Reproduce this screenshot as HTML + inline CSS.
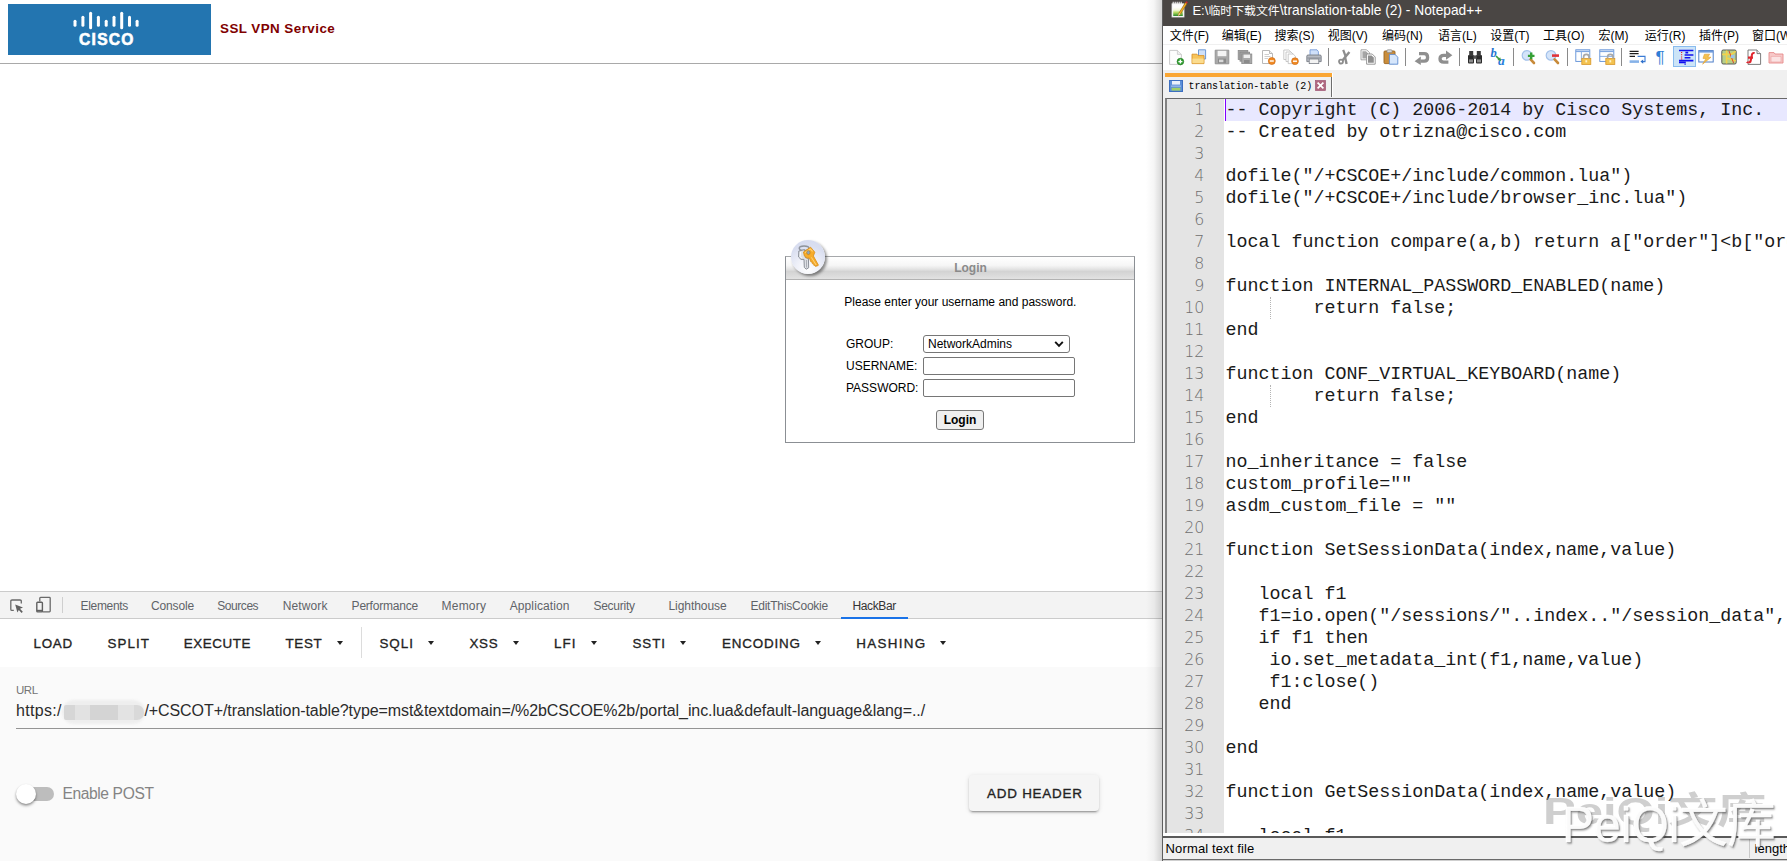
<!DOCTYPE html>
<html lang="en">
<head>
<meta charset="utf-8">
<title>SSL VPN Service</title>
<style>
*{box-sizing:border-box;margin:0;padding:0}
html,body{width:1787px;height:861px;overflow:hidden;background:#fff}
body{position:relative;font-family:"Liberation Sans","Noto Sans CJK SC",sans-serif;color:#000}
.abs{position:absolute}
/* ---------- browser page ---------- */
#page{position:absolute;left:0;top:0;width:1163px;height:591px;background:#fff;overflow:hidden}
#logo{position:absolute;left:8px;top:4px;width:203px;height:51px;background:#2375b0}
#svc{position:absolute;left:220px;top:21px;font-size:13.4px;font-weight:bold;color:#800000;letter-spacing:.45px;line-height:16px;white-space:nowrap}
#hr{position:absolute;left:0;top:63px;width:1163px;height:1px;background:#a9a9a9}
/* login box */
#lbox{position:absolute;left:785px;top:256px;width:350px;height:187px;border:1px solid #8b8f94;border-top-color:#a6a8ab;background:#fff}
#lhead{position:absolute;left:0;top:0;width:348px;height:23px;border-bottom:1px solid #b2b2b2;background:linear-gradient(#fff 0%,#f6f6f6 38%,#e4e4e4 55%,#d3d3d3 66%,#dbdbdb 85%,#e2e2e2 100%);text-align:center;font-size:12px;font-weight:bold;color:#8a8a8a;line-height:22px;padding-left:21px}
#lico{position:absolute;left:791px;top:240px;width:34px;height:34px;border-radius:50%;background:radial-gradient(circle at 50% 85%,#fff 0%,#eef0f8 35%,#d9def0 70%,#d3d9ee 100%);box-shadow:2px 2px 3px rgba(0,0,0,.45)}
.lt{position:absolute;font-size:12px;line-height:14px;white-space:nowrap;color:#000}
.inp{position:absolute;left:923px;width:152px;height:18px;border:1px solid #767676;background:#fff;border-radius:2px}
#lbtn{position:absolute;left:936px;top:410px;width:48px;height:20px;border:1px solid #767676;border-radius:3px;background:#efefef;font-size:12px;font-weight:bold;text-align:center;line-height:18px}
/* ---------- devtools ---------- */
#dt{position:absolute;left:0;top:591px;width:1163px;height:270px;background:#fafafa}
#dtbar{position:absolute;left:0;top:0;width:1163px;height:28px;background:#f3f3f3;border-top:1px solid #cbcbcb;border-bottom:1px solid #cbcbcb}
.tab{position:absolute;top:7px;font-size:12px;line-height:14px;color:#5f6368;white-space:nowrap}
#hbbar{position:absolute;left:0;top:28px;width:1163px;height:48px;background:#fff}
.hb{position:absolute;top:44.6px;font-size:13.4px;line-height:16px;font-weight:normal;letter-spacing:0;color:#222;-webkit-text-stroke:.32px #222;white-space:nowrap}
.car{position:absolute;top:50px;width:0;height:0;border-left:3.5px solid transparent;border-right:3.5px solid transparent;border-top:4px solid #222}
/* ---------- notepad++ ---------- */
#np{position:absolute;left:1163px;top:0;width:624px;height:861px;background:#f0f0f0;overflow:hidden}
#nptitle{position:absolute;left:-1px;top:0;width:625px;height:26px;background:#4a4644}
#npmenu{position:absolute;left:0;top:26px;width:624px;height:19px;background:#fff;border-bottom:1px solid #f0f0f0}
#nptool{position:absolute;left:0;top:45px;width:624px;height:26px;background:#fff;border-bottom:1px solid #e3e3e3}
.mi{position:absolute;top:2.4px;font-size:12px;line-height:16px;white-space:nowrap;color:#000}
#edit{position:absolute;left:2px;top:98px;width:622px;height:736px;background:#fff;border-top:1px solid #696969;border-left:2px solid #828282;overflow:hidden}
#margin{position:absolute;left:0;top:0;width:57px;height:740px;background:#e4e4e4}
.ln{position:absolute;left:0;width:37.4px;text-align:right;font-family:"DejaVu Sans",sans-serif;font-weight:200;font-size:15.8px;line-height:22px;height:22px;color:#6e6e6e;letter-spacing:0;margin-top:.2px}
.cl{position:absolute;left:58.4px;margin-top:1px;font-family:"Liberation Mono",monospace;font-size:18.33px;line-height:22px;height:22px;white-space:pre;color:#1a1a1a}
#status{position:absolute;left:0;top:836px;width:624px;height:25px;background:#f0f0f0}
#tabbar{position:absolute;left:0;top:70px;width:624px;height:28px;background:#f0f0f0}
#wm1{position:absolute;left:399px;top:797.7px;font-size:48px;line-height:56px;color:rgba(255,255,255,.96);-webkit-text-stroke:.35px rgba(255,255,255,.96);text-shadow:1px 1px 0 rgba(120,120,120,.55),1.5px 1.5px 2px rgba(0,0,0,.35);white-space:nowrap;font-family:"Liberation Sans","Noto Sans CJK SC",sans-serif;font-weight:normal;transform:scaleY(1.06);transform-origin:0 43.6px}
#wm2{position:absolute;left:380px;top:789.7px;font-size:49px;line-height:56px;color:rgba(140,140,140,.42);white-space:nowrap;transform:scaleY(.757);transform-origin:0 0;font-weight:bold;font-family:"Liberation Sans","Noto Sans CJK SC",sans-serif}
</style>
</head>
<body>
<div id="page">
  <div id="logo">
    <svg class="abs" style="left:0;top:0" width="203" height="51" viewBox="0 0 203 51">
      <g stroke="#fff" stroke-width="3" stroke-linecap="round" fill="none">
        <path d="M67 17.3V21.2"/><path d="M74.9 13.3V21.2"/><path d="M82.6 9.2V23.8"/><path d="M90.4 13.3V21.2"/><path d="M98.2 17.3V21.2"/><path d="M106 13.3V21.2"/><path d="M113.7 9.2V23.8"/><path d="M121.5 13.3V21.2"/><path d="M129.1 17.3V21.2"/>
      </g>
      <text x="98.9" y="41.4" text-anchor="middle" font-family="Liberation Sans, sans-serif" font-weight="bold" font-size="15.6" letter-spacing="1.25" fill="#fff" stroke="#fff" stroke-width=".6">CISCO</text>
    </svg>
  </div>
  <div id="svc">SSL VPN Service</div>
  <div id="hr"></div>

  <div id="lbox">
    <div id="lhead">Login</div>
  </div>
  <div id="lico">
    <svg class="abs" style="left:0;top:0" width="34" height="34" viewBox="0 0 34 34">
      <g stroke-linejoin="round">
        <ellipse cx="13.1" cy="8.2" rx="4.8" ry="2.3" fill="none" stroke="#8e939c" stroke-width="1.5"/>
        <path d="M7.8 11 L13.6 9.6 L14.4 17.6 L17.4 18.2 L17.7 27.8 L15.2 29.2 L13.3 27.4 L13 19.4 L10 19.4 L7.6 17 Z" fill="#dfe1e6" stroke="#8a8f98" stroke-width="1"/>
        <path d="M9.4 12 L9.2 16.6 L10.6 18" fill="none" stroke="#fff" stroke-width="1"/>
        <path d="M15.4 20 L15.6 27.6" fill="none" stroke="#a9adb5" stroke-width="1"/>
        <path d="M12.4 12 L19.6 7.2 L23.8 12.2 L22.4 16 L27.4 25 L26.6 26 L25.4 25.4 L25 26.8 L23.8 25.2 L23 25.6 L22.4 23.6 L21.4 23.8 L20.8 21.8 L19.8 21.8 L18.4 18 L16 18.2 L13.4 16 Z" fill="#f7ac2a" stroke="#d88d18" stroke-width=".8"/>
        <path d="M14.2 12.6 L19.4 9 L21.6 11.4" fill="none" stroke="#fdd27a" stroke-width="1.1"/>
        <path d="M20.4 17.4 L25.2 25" fill="none" stroke="#fcd88a" stroke-width=".9"/>
        <ellipse cx="17.4" cy="12.6" rx="1.7" ry="2" fill="#8fa4b8" stroke="#b87a14" stroke-width=".6"/>
      </g>
    </svg>
  </div>
  <div class="lt" style="left:844.3px;top:295px">Please enter your username and password.</div>
  <div class="lt" style="left:846px;top:337px">GROUP:</div>
  <div class="lt" style="left:846px;top:359px">USERNAME:</div>
  <div class="lt" style="left:846px;top:381px">PASSWORD:</div>
  <div class="inp" style="top:335px;width:147px;border-radius:3px"></div>
  <div class="lt" style="left:928px;top:337px">NetworkAdmins</div>
  <svg class="abs" style="left:1054px;top:340px" width="10" height="8" viewBox="0 0 10 8"><path d="M1.2 1.8 L5 5.8 L8.8 1.8" fill="none" stroke="#111" stroke-width="1.9"/></svg>
  <div class="inp" style="top:357px"></div>
  <div class="inp" style="top:379px"></div>
  <div id="lbtn">Login</div>
</div>
<div id="dt">
  <div id="dtbar">
    <svg class="abs" style="left:9px;top:6px" width="16" height="16" viewBox="0 0 16 16"><path d="M12.3 5.4V3.2Q12.3 2 11.1 2H3Q1.8 2 1.8 3.2V11.2Q1.8 12.4 3 12.4H4.8" fill="none" stroke="#6a6a6a" stroke-width="1.3"/><path d="M6.2 6.6 L14 9.6 L11 10.8 L13.8 13.8 L12.6 14.9 L9.8 11.9 L8.4 14.4 Z" fill="#606060"/></svg>
    <svg class="abs" style="left:34px;top:3.2px" width="18" height="18" viewBox="0 0 18 18"><path d="M5.8 6.6V3.2Q5.8 2.4 6.6 2.4H15.4Q16.2 2.4 16.2 3.2V16Q16.2 16.8 15.4 16.8H8.6" fill="none" stroke="#6a6a6a" stroke-width="1.3"/><rect x="2.8" y="7.3" width="5.6" height="9.6" rx=".8" fill="none" stroke="#606060" stroke-width="1.4"/><path d="M2.8 15.6H8.4" stroke="#606060" stroke-width="1.6"/></svg>
    <div class="abs" style="left:62px;top:5px;width:1px;height:16px;background:#cfcfcf"></div>
    <div class="tab" id="t0" style="left:80.6px;letter-spacing:-0.33px">Elements</div>
    <div class="tab" id="t1" style="left:151.1px;letter-spacing:-0.17px">Console</div>
    <div class="tab" id="t2" style="left:217.3px;letter-spacing:-0.45px">Sources</div>
    <div class="tab" id="t3" style="left:282.7px;letter-spacing:0.12px">Network</div>
    <div class="tab" id="t4" style="left:351.6px;letter-spacing:-0.22px">Performance</div>
    <div class="tab" id="t5" style="left:441.6px;letter-spacing:0.20px">Memory</div>
    <div class="tab" id="t6" style="left:509.7px;letter-spacing:0.11px">Application</div>
    <div class="tab" id="t7" style="left:593.4px;letter-spacing:-0.24px">Security</div>
    <div class="tab" id="t8" style="left:668.5px;letter-spacing:-0.07px">Lighthouse</div>
    <div class="tab" id="t9" style="left:750.4px;letter-spacing:-0.22px">EditThisCookie</div>
    <div class="tab" id="t10" style="left:852.5px;letter-spacing:-0.38px;color:#333">HackBar</div>
    <div class="abs" style="left:841px;top:25px;width:67px;height:2px;background:#1a73e8"></div>
  </div>
  <div id="hbbar"></div>
  <div class="hb" id="h0" style="left:33.6px;letter-spacing:0.70px">LOAD</div>
  <div class="hb" id="h1" style="left:107.5px;letter-spacing:1.03px">SPLIT</div>
  <div class="hb" id="h2" style="left:183.7px;letter-spacing:0.60px">EXECUTE</div>
  <div class="hb" id="h3" style="left:285.4px;letter-spacing:0.70px">TEST</div>
  <div class="car" style="left:337px"></div>
  <div class="hb" id="h4" style="left:379.4px;letter-spacing:1.03px">SQLI</div>
  <div class="car" style="left:428px"></div>
  <div class="hb" id="h5" style="left:469.4px;letter-spacing:0.70px">XSS</div>
  <div class="car" style="left:513px"></div>
  <div class="hb" id="h6" style="left:554px;letter-spacing:1.00px">LFI</div>
  <div class="car" style="left:591px"></div>
  <div class="hb" id="h7" style="left:632.4px;letter-spacing:0.97px">SSTI</div>
  <div class="car" style="left:680px"></div>
  <div class="hb" id="h8" style="left:722.1px;letter-spacing:0.81px">ENCODING</div>
  <div class="car" style="left:815px"></div>
  <div class="hb" id="h9" style="left:856.2px;letter-spacing:1.33px">HASHING</div>
  <div class="car" style="left:940px"></div>
  <div class="abs" style="left:361px;top:36px;width:1px;height:31px;background:#dcdcdc"></div>
  <div class="abs" style="left:16px;top:92px;font-size:11.5px;line-height:14px;color:#757575;letter-spacing:-.45px">URL</div>
  <div class="abs" id="u1" style="left:16px;letter-spacing:.3px;top:110px;font-size:16px;line-height:20px;color:#2b2b2b;white-space:nowrap">https:/</div>
  <div class="abs" style="left:62px;top:109px;width:83px;height:24px;border-radius:12px;background:#eeeeee;filter:blur(1.2px)"></div>
  <div class="abs" style="left:63.5px;top:114px;width:80px;height:15px;border-radius:2px 7px 7px 2px;background:linear-gradient(90deg,#d6d6d6 0%,#d6d6d6 14%,#e2e2e2 14%,#e2e2e2 32%,#d4d4d4 32%,#d4d4d4 68%,#e3e3e3 68%,#e3e3e3 88%,#d9d9d9 88%,#d9d9d9 100%);filter:blur(.5px)"></div>
  <div class="abs" id="u2" style="left:144.4px;letter-spacing:-.078px;top:110px;font-size:16px;line-height:20px;color:#2b2b2b;white-space:nowrap">/+CSCOT+/translation-table?type=mst&amp;textdomain=/%2bCSCOE%2b/portal_inc.lua&amp;default-language&amp;lang=../</div>
  <div class="abs" style="left:16px;top:137px;width:1147px;height:1px;background:#949494"></div>
  <div class="abs" style="left:18px;top:196px;width:36px;height:14px;border-radius:7px;background:#bdbdbd"></div>
  <div class="abs" style="left:16px;top:193px;width:20px;height:20px;border-radius:50%;background:#fff;box-shadow:0 2px 3px rgba(0,0,0,.3),0 1px 2px rgba(0,0,0,.2)"></div>
  <div class="abs" id="ep" style="left:62.4px;top:193.2px;font-size:15.6px;letter-spacing:-.38px;line-height:20px;color:#848484;white-space:nowrap">Enable POST</div>
  <div class="abs" style="left:969px;top:184px;width:130px;height:36px;border-radius:4px;background:#f5f5f5;box-shadow:0 3px 1px -2px rgba(0,0,0,.2),0 2px 2px 0 rgba(0,0,0,.14),0 1px 5px 0 rgba(0,0,0,.12)"></div>
  <div class="hb" id="ah" style="left:987px;letter-spacing:0.79px;top:194.6px">ADD HEADER</div>
  <div class="abs" style="left:1146px;top:0;width:16px;height:270px;background:linear-gradient(90deg,rgba(0,0,0,0),rgba(0,0,0,.04) 50%,rgba(0,0,0,.16))"></div>
</div>
<div id="np">
  <div id="nptitle">
    <svg class="abs" style="left:9.4px;top:1.4px" width="17" height="17" viewBox="0 0 17 17"><defs><linearGradient id="npg" x1="0" y1="0" x2="0" y2="1"><stop offset="0" stop-color="#ffffff"/><stop offset=".35" stop-color="#f4f6d8"/><stop offset=".6" stop-color="#b9dc62"/><stop offset="1" stop-color="#2a8a2a"/></linearGradient></defs><rect x="1" y="2.8" width="12" height="13.2" fill="#fdfdfd" stroke="#e9e9e9" stroke-width=".8"/><path d="M2.2 3V.8M4.2 3V.8M6.2 3V.8M8.2 3V.8M10.2 3V.8" stroke="#f4f4f4" stroke-width="1.1"/><rect x="2.2" y="6" width="9.6" height="9" fill="url(#npg)"/><path d="M14.4 1.6 L8 12 L7 15 L9.6 13 L16 2.6Z" fill="#f5b323" stroke="#8a5a10" stroke-width=".6"/><path d="M8 12 L7 15 L9.6 13Z" fill="#f3d9a0"/><path d="M14.4 1.6 L16 2.6 L16.8 1.2 L15.4 .3Z" fill="#d8262c"/></svg>
    <div class="abs" id="ttl" style="left:30.4px;top:3.4px;font-size:13.1px;line-height:15px;color:#fff;white-space:nowrap">E:\<span style="font-size:11.9px;position:relative;top:-.5px">临时下载文件</span><span style="font-size:13.75px">\translation-table (2) - Notepad++</span></div>
  </div>
  <div id="npmenu"><div class="mi" id="m0" style="left:6.8px">文件(F)</div><div class="mi" id="m1" style="left:58.8px">编辑(E)</div><div class="mi" id="m2" style="left:111.6px">搜索(S)</div><div class="mi" id="m3" style="left:164.8px">视图(V)</div><div class="mi" id="m4" style="left:219px">编码(N)</div><div class="mi" id="m5" style="left:275.1px">语言(L)</div><div class="mi" id="m6" style="left:327.3px">设置(T)</div><div class="mi" id="m7" style="left:380.1px">工具(O)</div><div class="mi" id="m8" style="left:435.6px">宏(M)</div><div class="mi" id="m9" style="left:481.8px">运行(R)</div><div class="mi" id="m10" style="left:535.9px">插件(P)</div><div class="mi" id="m11" style="left:589.1px">窗口(W)</div></div>
  <div id="nptool"><svg class="abs" style="left:5px;top:4px;overflow:visible" width="16" height="16" viewBox="0 0 16 16"><path d="M1.6 1.4H9.4L13.4 5.4V15.4H1.6Z" fill="#fdfdfd" stroke="#c4c4c4" stroke-width=".9"/><path d="M9.4 1.4V5.4H13.4" fill="#f0f0f0" stroke="#c9c9c9" stroke-width=".8"/><circle cx="12.4" cy="12.6" r="3.3" fill="#2f9e2f" stroke="#1f7d1f" stroke-width=".7"/><path d="M12.4 10.6V14.6M10.4 12.6H14.4" stroke="#fff" stroke-width="1.4"/></svg><svg class="abs" style="left:28px;top:4px;overflow:visible" width="16" height="16" viewBox="0 0 16 16"><path d="M7.5 .8H14.6V10H7.5Z" fill="#cfe0f7" stroke="#5f8fd2" stroke-width=".9"/><path d="M1 5.2H6L7 6.6H13V14.6H1Z" fill="#f7c45a" stroke="#d9942a" stroke-width=".9"/><path d="M1.4 9.6H12.6V14.2H1.4Z" fill="#fbdc8e"/></svg><svg class="abs" style="left:50.8px;top:4px;overflow:visible" width="16" height="16" viewBox="0 0 16 16"><path d="M1.2 1.2H14.8V14.8H1.2Z" fill="#a9a9a9" stroke="#8e8e8e" stroke-width=".9"/><rect x="3.6" y="1.8" width="8.8" height="5.4" fill="#f4f4f4"/><rect x="4" y="9.6" width="8" height="4.6" fill="#8b8b8b"/><rect x="5" y="10.6" width="4.4" height="2.6" fill="#d9d9d9"/></svg><svg class="abs" style="left:74px;top:4px;overflow:visible" width="16" height="16" viewBox="0 0 16 16"><rect x="1.2" y="1.4" width="9.6" height="9" fill="#a3a3a3" stroke="#8a8a8a" stroke-width=".8"/><rect x="3" y="3.2" width="9.6" height="9" fill="#a3a3a3" stroke="#8a8a8a" stroke-width=".8"/><rect x="4.8" y="5" width="10" height="9.6" fill="#a9a9a9" stroke="#8a8a8a" stroke-width=".8"/><rect x="6.6" y="5.6" width="6.4" height="3.4" fill="#efefef"/><rect x="7" y="11" width="5.6" height="3" fill="#8a8a8a"/></svg><svg class="abs" style="left:97.3px;top:4px;overflow:visible" width="16" height="16" viewBox="0 0 16 16"><path d="M2.5 1.5H9.5L12.5 4.5V14.5H2.5Z" fill="#fff" stroke="#b9b9b9"/><path d="M9.5 1.5V4.5H12.5" fill="#eee" stroke="#b9b9b9"/><path d="M4.5 5.5H9M4.5 7.5H10.5M4.5 9.5H8" stroke="#c9c9c9" stroke-width=".9"/><circle cx="11.8" cy="12" r="3.5" fill="#f08a24" stroke="#c9650f" stroke-width=".6"/><path d="M9.8 12H13.8" stroke="#fff" stroke-width="1.4"/></svg><svg class="abs" style="left:119.7px;top:4px;overflow:visible" width="16" height="16" viewBox="0 0 16 16"><path d="M.8 1H5.8L8 3.2V10.5H.8Z" fill="#fff" stroke="#bdbdbd" stroke-width=".8"/><path d="M3 3H8L10.2 5.2V12.5H3Z" fill="#fff" stroke="#bdbdbd" stroke-width=".8"/><path d="M5.2 5H10.2L12.4 7.2V14.6H5.2Z" fill="#fff" stroke="#bdbdbd" stroke-width=".8"/><circle cx="12" cy="12.2" r="3.4" fill="#f08a24" stroke="#c9650f" stroke-width=".6"/><path d="M10 12.2H14" stroke="#fff" stroke-width="1.4"/></svg><svg class="abs" style="left:143px;top:4px;overflow:visible" width="16" height="16" viewBox="0 0 16 16"><path d="M4 .8H11L12.4 2.6V7H4Z" fill="#cfe0fa" stroke="#6b93d6" stroke-width=".8"/><path d="M.8 7.2Q.8 6 2 6H14Q15.2 6 15.2 7.2V12.6H.8Z" fill="#b8bcc4" stroke="#6e737c" stroke-width=".8"/><rect x="3.2" y="10" width="9.6" height="4.6" fill="#f2f2f2" stroke="#7a7f88" stroke-width=".8"/><path d="M1.4 9H14.6" stroke="#7e838c" stroke-width=".8"/></svg><svg class="abs" style="left:173.5px;top:4px;overflow:visible" width="16" height="16" viewBox="0 0 16 16"><path d="M6.2 .8 L9 8.4" stroke="#8d8d8d" stroke-width="2.2" fill="none"/><path d="M12.4 3 L5.4 11.6" stroke="#8d8d8d" stroke-width="2.4" fill="none"/><circle cx="4" cy="12.6" r="2" fill="none" stroke="#8d8d8d" stroke-width="1.8"/><path d="M8.2 9 L9.6 15" stroke="#8d8d8d" stroke-width="2.4"/></svg><svg class="abs" style="left:196.7px;top:4px;overflow:visible" width="16" height="16" viewBox="0 0 16 16"><path d="M1 .8H6.6L9.6 3.8V10.8H1Z" fill="#fff" stroke="#9a9a9a" stroke-width=".9"/><path d="M2.4 2.2H6L8.2 4.4V9.4H2.4Z" fill="#a5a5a5"/><path d="M6.6 5H12.2L15.2 8V15.2H6.6Z" fill="#fff" stroke="#8e8e8e" stroke-width=".9"/><path d="M8 6.4H11.6L13.8 8.6V13.8H8Z" fill="#8e8e8e"/></svg><svg class="abs" style="left:220px;top:4px;overflow:visible" width="16" height="16" viewBox="0 0 16 16"><rect x="1" y="2" width="11" height="12.6" rx="1" fill="#c98d3b" stroke="#9a6420" stroke-width=".9"/><rect x="4" y=".8" width="5" height="2.8" rx=".8" fill="#d8d8d8" stroke="#8a8a8a" stroke-width=".7"/><path d="M6.4 5.4H12L14.8 8.2V15.2H6.4Z" fill="#d6e6fb" stroke="#5c8bd0" stroke-width=".9"/></svg><svg class="abs" style="left:251.4px;top:4px;overflow:visible" width="16" height="16" viewBox="0 0 16 16"><path d="M5 4.6H10.2Q13.6 4.6 13.6 8.4Q13.6 12.2 10.2 12.2H6.5" fill="none" stroke="#8f8f8f" stroke-width="3.3"/><path d="M.6 12.2 L6.8 7.6V16Z" fill="#8f8f8f"/></svg><svg class="abs" style="left:273.7px;top:4px;overflow:visible" width="16" height="16" viewBox="0 0 16 16"><path d="M9.2 6.4H6.8Q3 6.4 3 9.8Q3 13.2 6.8 13.2H11.4" fill="none" stroke="#8f8f8f" stroke-width="3.3"/><path d="M15.4 6.2 L9 1.6V10.8Z" fill="#8f8f8f"/></svg><svg class="abs" style="left:304px;top:4px;overflow:visible" width="16" height="16" viewBox="0 0 16 16"><rect x="1" y="6" width="6" height="8.4" rx="1" fill="#2b2b2b"/><rect x="9" y="6" width="6" height="8.4" rx="1" fill="#2b2b2b"/><rect x="2.2" y="2" width="4" height="5" fill="#3a3a3a"/><rect x="9.8" y="2" width="4" height="5" fill="#3a3a3a"/><rect x="6.4" y="6.4" width="3.2" height="3.4" fill="#555"/><rect x="2" y="10.4" width="4" height="3" fill="#8c8c8c"/><rect x="10" y="10.4" width="4" height="3" fill="#8c8c8c"/></svg><svg class="abs" style="left:328px;top:4px;overflow:visible" width="16" height="16" viewBox="0 0 16 16"><text x="-.6" y="8.2" font-family="Liberation Serif, serif" font-weight="bold" font-style="italic" font-size="12.5" fill="#1f74d0">b</text><text x="7" y="15.8" font-family="Liberation Serif, serif" font-weight="bold" font-style="italic" font-size="13.5" fill="#2a80dc">a</text><path d="M5 7 L8.4 10.4" stroke="#3f9a3f" stroke-width="1.6"/><path d="M10.2 12 L6.4 11 L9.2 8.2Z" fill="#3f9a3f"/></svg><svg class="abs" style="left:357.8px;top:4px;overflow:visible" width="16" height="16" viewBox="0 0 16 16"><circle cx="6" cy="6.4" r="4.8" fill="#d4e4f9" stroke="#a4c2ea" stroke-width="1.2"/><path d="M9.6 10.4 L13 14" stroke="#c78a3a" stroke-width="2.6" stroke-linecap="round"/><path d="M10.2 3.6V10.2M6.9 6.9H13.5" stroke="#35a035" stroke-width="2.4"/></svg><svg class="abs" style="left:382px;top:4px;overflow:visible" width="16" height="16" viewBox="0 0 16 16"><circle cx="6" cy="6.4" r="4.8" fill="#d4e4f9" stroke="#a4c2ea" stroke-width="1.2"/><path d="M9.6 10.4 L13 14" stroke="#c78a3a" stroke-width="2.6" stroke-linecap="round"/><path d="M7 6.6H14" stroke="#e0343a" stroke-width="2.6"/></svg><svg class="abs" style="left:412.4px;top:4px;overflow:visible" width="16" height="16" viewBox="0 0 16 16"><rect x=".8" y=".8" width="14" height="11.6" fill="#fdfeff" stroke="#5d8fd6" stroke-width=".9"/><path d="M.8 2.4H14.8" stroke="#7fa7e2" stroke-width="1.4"/><path d="M6.4 3V12.4" stroke="#7fa7e2" stroke-width=".9"/><rect x="6.8" y="9.4" width="9" height="6" fill="#f3c24f" stroke="#d9982a" stroke-width=".8"/><path d="M8.6 9.4V8Q8.6 5.4 11.3 5.4Q14 5.4 14 8V9.4" fill="none" stroke="#a9a9a9" stroke-width="1.7"/><rect x="10.4" y="11.2" width="1.8" height="2.2" fill="#fff3c8"/></svg><svg class="abs" style="left:435.7px;top:4px;overflow:visible" width="16" height="16" viewBox="0 0 16 16"><rect x=".8" y=".8" width="14" height="11.6" fill="#fdfeff" stroke="#5d8fd6" stroke-width=".9"/><path d="M.8 2.4H14.8" stroke="#7fa7e2" stroke-width="1.4"/><path d="M.8 7.4H14.8" stroke="#7fa7e2" stroke-width=".9"/><rect x="6.8" y="9.4" width="9" height="6" fill="#f3c24f" stroke="#d9982a" stroke-width=".8"/><path d="M8.6 9.4V8Q8.6 5.4 11.3 5.4Q14 5.4 14 8V9.4" fill="none" stroke="#a9a9a9" stroke-width="1.7"/><rect x="10.4" y="11.2" width="1.8" height="2.2" fill="#fff3c8"/></svg><svg class="abs" style="left:466px;top:4px;overflow:visible" width="16" height="16" viewBox="0 0 16 16"><path d="M.6 2.4H9.6M.6 4.6H9.6M.6 7.4H6" stroke="#1c1c1c" stroke-width="1.1"/><path d="M.6 12.6H10" stroke="#86b2e8" stroke-width="2.6"/><path d="M8.6 7.4H16V12.6H13.6" fill="none" stroke="#3a7bd5" stroke-width="1.1"/><path d="M11.4 12.6 L14.2 10.4V14.8Z" fill="#2f6fc9"/></svg><svg class="abs" style="left:489.4px;top:4px;overflow:visible" width="16" height="16" viewBox="0 0 16 16"><text x="8" y="14" text-anchor="middle" font-family="Liberation Sans, sans-serif" font-size="17" fill="#2f7fd6">¶</text></svg><div class="abs" style="left:510px;top:1px;width:23px;height:21px;background:#cce4f7;border:1px solid #8abcee"></div><svg class="abs" style="left:513.6px;top:4px;overflow:visible" width="16" height="16" viewBox="0 0 16 16"><path d="M2 1.5H16.4M8.4 3.6H11.2M7.6 6H16.4M7.6 8.8H13.4M2 11.6H16.4M2 13.5H8.8M7.6 15.2H8.6" stroke="#1010f0" stroke-width="1.6"/><path d="M4.6 3V10.4" stroke="#e8202a" stroke-width="1.2" stroke-dasharray="1.1 1.1"/></svg><svg class="abs" style="left:535px;top:4px;overflow:visible" width="16" height="16" viewBox="0 0 16 16"><rect x=".8" y="1.6" width="14.4" height="11.4" fill="#fdfeff" stroke="#4f7fc8" stroke-width="1"/><path d="M.8 2.8H15.2" stroke="#6f9bdc" stroke-width="1.6"/><path d="M11.6 5.2H6.4L5 9.4H8L4.6 15.2 L13 8.2H9.8Z" fill="#f5c250" stroke="#e0a030" stroke-width=".6"/></svg><svg class="abs" style="left:558.4px;top:4px;overflow:visible" width="16" height="16" viewBox="0 0 16 16"><rect x=".8" y="1" width="14.4" height="14" rx="1.4" fill="#b7cf8b" stroke="#4a4a4a" stroke-width=".9"/><path d="M1.2 5.4H10L14.8 2.4M5.6 1.4V14.6M5.6 9 L14.8 12" stroke="#f3d24a" stroke-width="1.6" fill="none"/><path d="M8 2 L12.6 14" stroke="#e0442c" stroke-width="1"/><rect x="10" y="6" width="3.6" height="3" fill="#9cc4e8"/></svg><svg class="abs" style="left:581.6px;top:4px;overflow:visible" width="16" height="16" viewBox="0 0 16 16"><path d="M3 1H12L15.6 4.6V15.4H3Z" fill="#fff" stroke="#6e6e6e" stroke-width=".9"/><path d="M12 1V4.6H15.6" fill="#eee" stroke="#6e6e6e" stroke-width=".9"/><path d="M9.6 4.2Q7.4 3.2 6.8 6.4L5.6 12Q5.2 13.8 3.6 13M3 8.6H8" fill="none" stroke="#e0242c" stroke-width="2.1"/><path d="M.8 13.4L3.4 12L3.6 14.4Z" fill="#e0242c"/></svg><svg class="abs" style="left:605px;top:4px;overflow:visible" width="16" height="16" viewBox="0 0 16 16"><path d="M1 3.6H6L7 5H15V14H1Z" fill="#f7c9c9" stroke="#e58a8a" stroke-width=".9"/><path d="M3 7.4H13V13H3Z" fill="#fbe3e3" stroke="#eaa0a0" stroke-width=".6"/></svg><div class="abs" style="left:164.8px;top:3px;width:1px;height:18px;background:#8a8a8a"></div><div class="abs" style="left:241.8px;top:3px;width:1px;height:18px;background:#8a8a8a"></div><div class="abs" style="left:295.5px;top:3px;width:1px;height:18px;background:#8a8a8a"></div><div class="abs" style="left:350.1px;top:3px;width:1px;height:18px;background:#8a8a8a"></div><div class="abs" style="left:403.8px;top:3px;width:1px;height:18px;background:#8a8a8a"></div><div class="abs" style="left:457.9px;top:3px;width:1px;height:18px;background:#8a8a8a"></div></div>
  <div id="tabbar">
    <div class="abs" style="left:2px;top:3px;width:167px;height:24px;background:#f0f0f0;border-right:1px solid #6d6d6d;box-shadow:1px 0 0 #fff"></div>
    <div class="abs" style="left:2px;top:3px;width:167px;height:4px;background:#faa633"></div>
    <svg class="abs" style="left:6px;top:10px" width="14" height="12" viewBox="0 0 14 12"><rect x=".5" y=".5" width="13" height="11" fill="#5b8fd9" stroke="#3d6fc0"/><rect x="3" y="1" width="8" height="3.6" fill="#e9f1fb"/><rect x="2" y="5.4" width="10" height="1.6" fill="#8fb3e6"/><rect x="2.6" y="7.8" width="8.8" height="2.8" fill="#9fd068"/></svg>
    <div class="abs" id="tabt" style="left:25.6px;top:10.4px;font-family:'Liberation Mono',monospace;font-size:10px;line-height:14px;color:#000;white-space:nowrap;letter-spacing:-.12px">translation-table (2)</div>
    <svg class="abs" style="left:152px;top:10px" width="11" height="11" viewBox="0 0 11 11"><rect x=".4" y=".4" width="10.2" height="10.2" fill="#b0687f" stroke="#9a5070" stroke-width=".6"/><path d="M2.6 2.6 L8.4 8.4M8.4 2.6 L2.6 8.4" stroke="#fff" stroke-width="1.7"/></svg>
  </div>
  <div id="edit">
    <div id="margin"></div>
    <div class="abs" style="left:58px;top:0;width:564px;height:22px;background:#e8e8ff"></div>
    <div class="abs" style="left:58px;top:0;width:1px;height:22px;background:#8000ff"></div>
    <div class="abs" style="left:103px;top:198px;width:0;height:22px;border-left:1px dotted #b4b4b4"></div>
    <div class="abs" style="left:103px;top:286px;width:0;height:22px;border-left:1px dotted #b4b4b4"></div>
<div class="ln" style="top:0px">1</div><div class="cl" style="top:0px">-- Copyright (C) 2006-2014 by Cisco Systems, Inc.</div>
<div class="ln" style="top:22px">2</div><div class="cl" style="top:22px">-- Created by otrizna@cisco.com</div>
<div class="ln" style="top:44px">3</div>
<div class="ln" style="top:66px">4</div><div class="cl" style="top:66px">dofile("/+CSCOE+/include/common.lua")</div>
<div class="ln" style="top:88px">5</div><div class="cl" style="top:88px">dofile("/+CSCOE+/include/browser_inc.lua")</div>
<div class="ln" style="top:110px">6</div>
<div class="ln" style="top:132px">7</div><div class="cl" style="top:132px">local function compare(a,b) return a["order"]&lt;b["order"] end</div>
<div class="ln" style="top:154px">8</div>
<div class="ln" style="top:176px">9</div><div class="cl" style="top:176px">function INTERNAL_PASSWORD_ENABLED(name)</div>
<div class="ln" style="top:198px">10</div><div class="cl" style="top:198px">        return false;</div>
<div class="ln" style="top:220px">11</div><div class="cl" style="top:220px">end</div>
<div class="ln" style="top:242px">12</div>
<div class="ln" style="top:264px">13</div><div class="cl" style="top:264px">function CONF_VIRTUAL_KEYBOARD(name)</div>
<div class="ln" style="top:286px">14</div><div class="cl" style="top:286px">        return false;</div>
<div class="ln" style="top:308px">15</div><div class="cl" style="top:308px">end</div>
<div class="ln" style="top:330px">16</div>
<div class="ln" style="top:352px">17</div><div class="cl" style="top:352px">no_inheritance = false</div>
<div class="ln" style="top:374px">18</div><div class="cl" style="top:374px">custom_profile=""</div>
<div class="ln" style="top:396px">19</div><div class="cl" style="top:396px">asdm_custom_file = ""</div>
<div class="ln" style="top:418px">20</div>
<div class="ln" style="top:440px">21</div><div class="cl" style="top:440px">function SetSessionData(index,name,value)</div>
<div class="ln" style="top:462px">22</div>
<div class="ln" style="top:484px">23</div><div class="cl" style="top:484px">   local f1</div>
<div class="ln" style="top:506px">24</div><div class="cl" style="top:506px">   f1=io.open("/sessions/"..index.."/session_data","w")</div>
<div class="ln" style="top:528px">25</div><div class="cl" style="top:528px">   if f1 then</div>
<div class="ln" style="top:550px">26</div><div class="cl" style="top:550px">    io.set_metadata_int(f1,name,value)</div>
<div class="ln" style="top:572px">27</div><div class="cl" style="top:572px">    f1:close()</div>
<div class="ln" style="top:594px">28</div><div class="cl" style="top:594px">   end</div>
<div class="ln" style="top:616px">29</div>
<div class="ln" style="top:638px">30</div><div class="cl" style="top:638px">end</div>
<div class="ln" style="top:660px">31</div>
<div class="ln" style="top:682px">32</div><div class="cl" style="top:682px">function GetSessionData(index,name,value)</div>
<div class="ln" style="top:704px">33</div>
<div class="ln" style="top:726px">34</div><div class="cl" style="top:726px">   local f1</div>
  </div>
  <div class="abs" style="left:0;top:833px;width:624px;height:3px;background:#fff"></div>
  <div id="status">
    <div class="abs" style="left:0;top:0;width:624px;height:1.5px;background:#5a5a5a"></div>
    <div class="abs" id="st1" style="left:2.6px;top:5px;font-size:13px;line-height:15px;letter-spacing:.13px;white-space:nowrap">Normal text file</div>
    <div class="abs" style="left:586px;top:3px;width:1px;height:19px;background:#c9c9c9"></div>
    <div class="abs" style="left:591.6px;top:5px;font-size:13px;line-height:15px;white-space:nowrap">length : 3,954</div>
    <div class="abs" style="left:0;top:23px;width:624px;height:1px;background:#6a6a6a"></div>
    <div class="abs" style="left:0;top:24px;width:624px;height:1px;background:#cfcfcf"></div>
  </div>
  <div id="wm2">PeiQi文库</div>
  <div id="wm1">PeiQi文库</div>
</div>
<div class="abs" style="left:1162px;top:0;width:1px;height:861px;background:#5e5e5e"></div>
<div class="abs" style="left:1146px;top:0;width:16px;height:591px;background:linear-gradient(90deg,rgba(0,0,0,0),rgba(0,0,0,.04) 50%,rgba(0,0,0,.16))"></div>
</body>
</html>
